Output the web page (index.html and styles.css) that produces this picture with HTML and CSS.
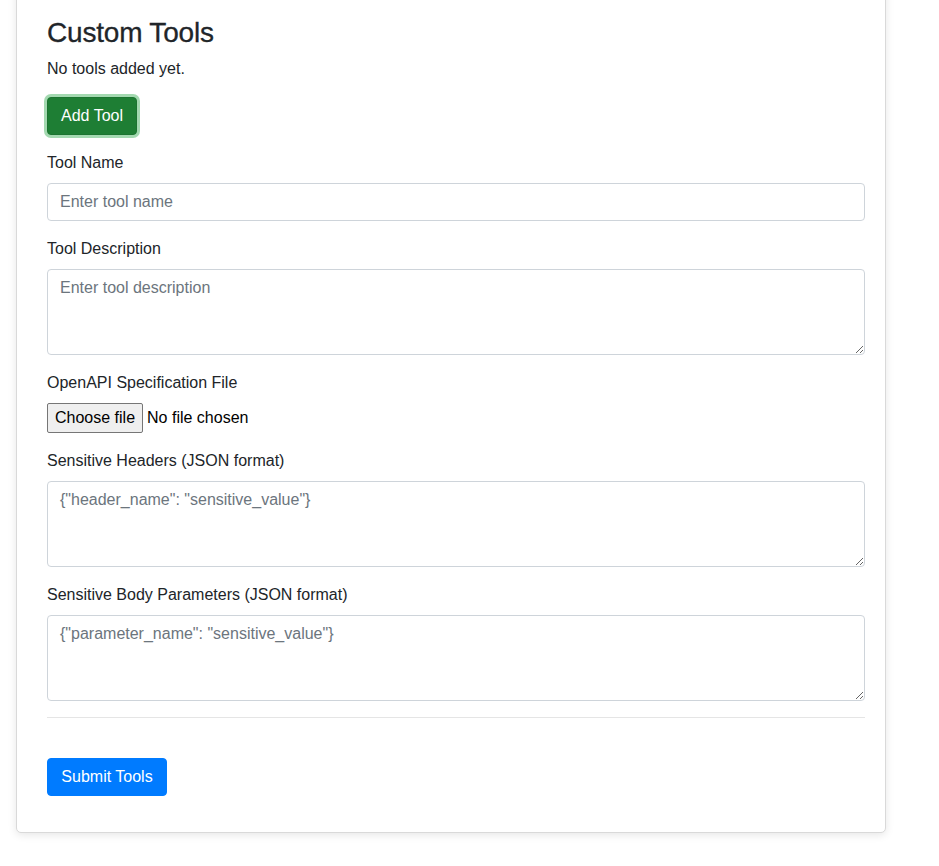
FILE: index.html
```html
<!DOCTYPE html>
<html lang="en">
<head>
<meta charset="utf-8">
<title>Custom Tools</title>
<link rel="stylesheet" href="styles.css">
</head>
<body>
<div class="page">
  <div class="card">
    <h3 class="title">Custom Tools</h3>
    <p class="empty">No tools added yet.</p>
    <div class="actions">
      <button class="btn btn-success" type="button">Add Tool</button>
    </div>
    <form class="tool-form">
      <div class="form-group">
        <label class="label">Tool Name</label>
        <input class="form-control" type="text" placeholder="Enter tool name">
      </div>
      <div class="form-group">
        <label class="label">Tool Description</label>
        <textarea class="form-control textarea" rows="3" placeholder="Enter tool description"></textarea>
      </div>
      <div class="form-group">
        <label class="label">OpenAPI Specification File</label>
        <label class="file-control">
          <input class="file-hidden" type="file">
          <span class="file-button">Choose file</span>
          <span class="file-name">No file chosen</span>
        </label>
      </div>
      <div class="form-group">
        <label class="label">Sensitive Headers (JSON format)</label>
        <textarea class="form-control textarea" rows="3" placeholder='{"header_name": "sensitive_value"}'></textarea>
      </div>
      <div class="form-group">
        <label class="label">Sensitive Body Parameters (JSON format)</label>
        <textarea class="form-control textarea" rows="3" placeholder='{"parameter_name": "sensitive_value"}'></textarea>
      </div>
      <hr class="divider">
      <div class="submit-row">
        <button class="btn btn-primary" type="button">Submit Tools</button>
      </div>
    </form>
  </div>
</div>
</body>
</html>
```

FILE: styles.css
```css
* { box-sizing: border-box; }

html, body {
  margin: 0;
  padding: 0;
  background: #fff;
  overflow: hidden;
}

body {
  font-family: "Liberation Sans", Arial, sans-serif;
  font-size: 16px;
  line-height: 24px;
  color: #212529;
}

.page {
  padding: 0 53px 40px 16px;
}

.card {
  width: 870px;
  margin-top: -15px;
  padding: 30px 20px 20px 30px;
  background: #fff;
  border: 1px solid #d9d9d9;
  border-radius: 5px;
  box-shadow: 0 2px 8px rgba(0, 0, 0, 0.1);
}

.title {
  margin: 0 0 8px 0;
  font-size: 28px;
  line-height: 33px;
  font-weight: 500;
  letter-spacing: -0.2px;
  -webkit-text-stroke: 0.3px #212529;
}

.empty {
  margin: 0 0 16px 0;
}

.actions {
  display: flex;
  margin-bottom: 16px;
}

.btn {
  display: inline-block;
  font-family: inherit;
  font-size: 16px;
  line-height: 24px;
  padding: 6px 12px;
  border: 1px solid transparent;
  border-radius: 4px;
  color: #fff;
  cursor: pointer;
}

.btn-success {
  width: 90px;
  background: #1e7e34;
  border-color: #1c7430;
  box-shadow: 0 0 0 3px rgba(72, 180, 97, 0.5);
}

.btn-primary {
  width: 120px;
  background: #007bff;
  border-color: #007bff;
}

.form-group {
  margin-bottom: 16px;
}

.label {
  display: block;
  margin-bottom: 8px;
}

.form-control {
  display: block;
  width: 100%;
  height: 38px;
  padding: 6px 12px;
  font-family: inherit;
  font-size: 16px;
  line-height: 24px;
  color: #495057;
  background: #fff;
  border: 1px solid #ced4da;
  border-radius: 4px;
}

.form-control::placeholder {
  color: #6c757d;
  opacity: 1;
}

.textarea {
  height: 86px;
  resize: vertical;
}

.file-control {
  display: flex;
  align-items: center;
  gap: 4px;
  height: 30px;
  cursor: pointer;
}

.file-hidden {
  display: none;
}

.file-button {
  display: flex;
  align-items: center;
  height: 30px;
  padding: 0 7px;
  color: #000;
  background: #efefef;
  border: 1px solid #767676;
  border-radius: 2px;
}

.file-name {
  color: #000;
}

.divider {
  margin: 0 0 40px 0;
  border: 0;
  border-top: 1px solid rgba(0, 0, 0, 0.1);
}

.submit-row {
  display: flex;
  margin-bottom: 16px;
}
```
